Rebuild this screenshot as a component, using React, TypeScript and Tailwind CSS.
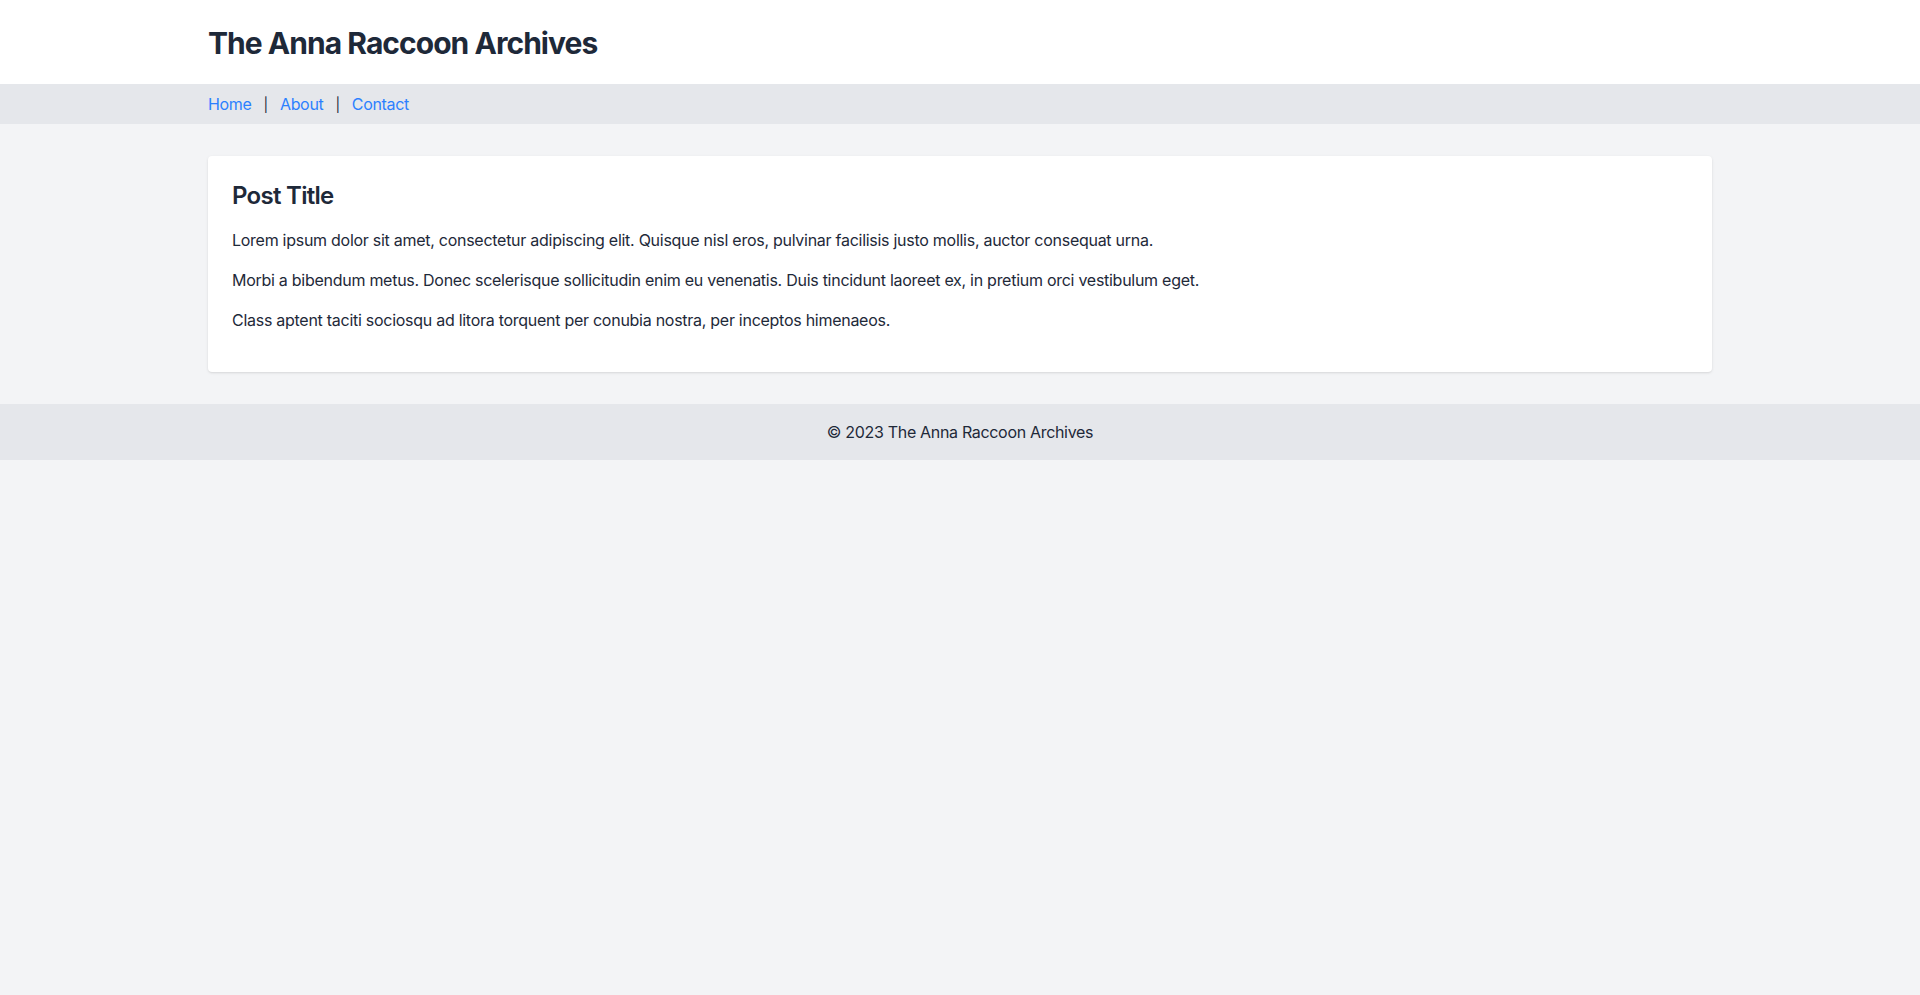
const links = ["Home", "About", "Contact"];

const paragraphs = [
  "Lorem ipsum dolor sit amet, consectetur adipiscing elit. Quisque nisl eros, pulvinar facilisis justo mollis, auctor consequat urna.",
  "Morbi a bibendum metus. Donec scelerisque sollicitudin enim eu venenatis. Duis tincidunt laoreet ex, in pretium orci vestibulum eget.",
  "Class aptent taciti sociosqu ad litora torquent per conubia nostra, per inceptos himenaeos.",
];

export default function App() {
  return (
    <div className="min-h-screen bg-gray-100 text-gray-800 font-['Inter',sans-serif] tracking-[-0.02em]">
      <header className="bg-white">
        <div className="container mx-auto px-4 py-6">
          <h1 className="text-3xl font-bold tracking-[-0.032em] translate-y-px">The Anna Raccoon Archives</h1>
        </div>
      </header>

      <nav className="bg-gray-200">
        <div className="container mx-auto px-4 py-2 flex items-center">
          {links.map((link, i) => (
            <span key={link} className="flex items-center">
              {i > 0 && <span className="mx-3 text-[14px] text-gray-800">|</span>}
              <a href="#" className="text-blue-500 hover:underline">
                {link}
              </a>
            </span>
          ))}
        </div>
      </nav>

      <main className="container mx-auto px-4 py-8">
        <article className="bg-white rounded shadow p-6 tracking-[-0.017em]">
          <h2 className="text-2xl font-semibold tracking-[-0.03em] mb-4">Post Title</h2>
          {paragraphs.map((text, i) => (
            <p key={i} className="mb-4">
              {text}
            </p>
          ))}
        </article>
      </main>

      <footer className="bg-gray-200">
        <div className="container mx-auto px-4 py-4 text-center">
          &copy; 2023 The Anna Raccoon Archives
        </div>
      </footer>
    </div>
  );
}
